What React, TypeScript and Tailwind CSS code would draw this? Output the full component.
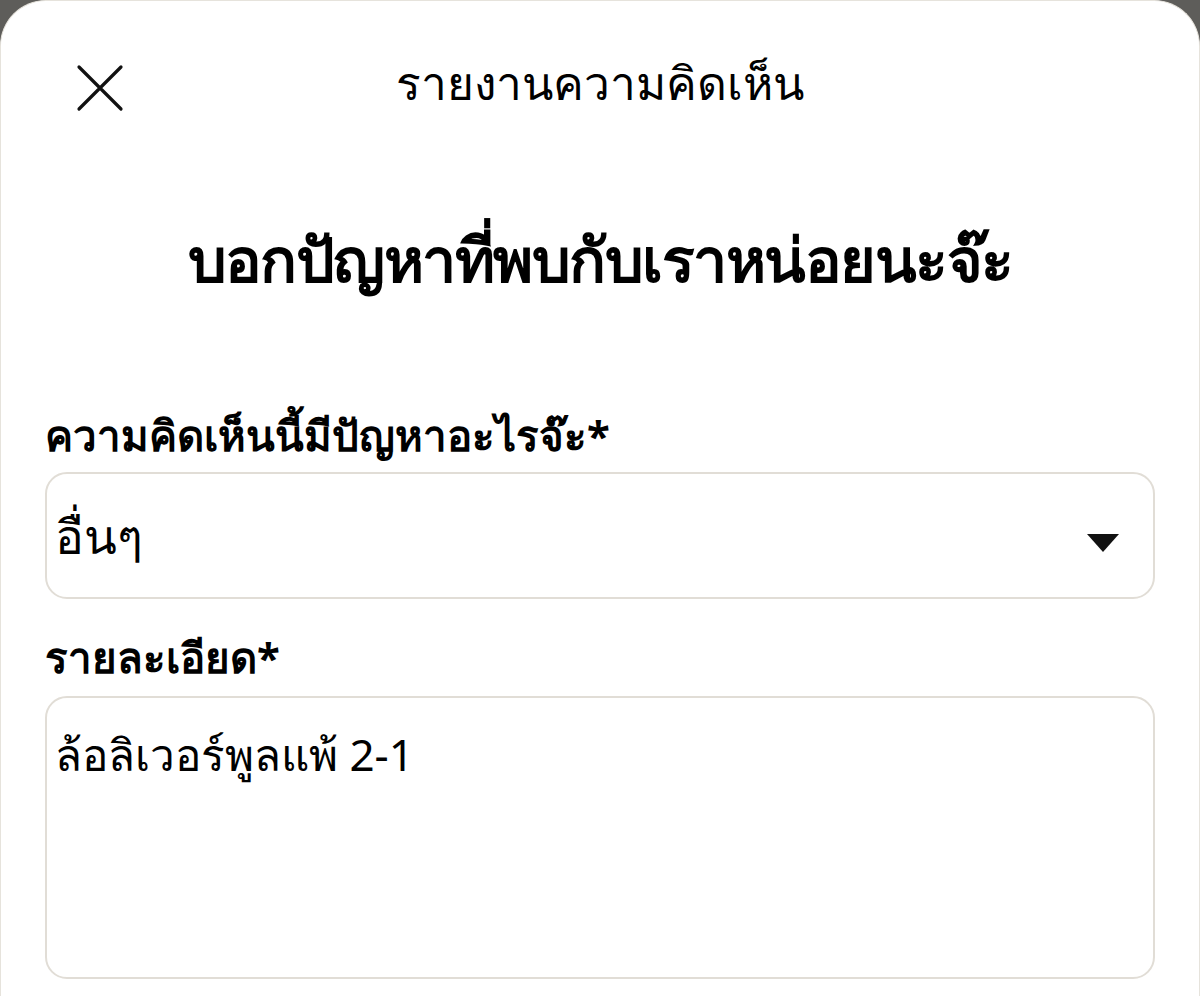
import { useState } from "react"

export default function App() {
  const [reason] = useState("อื่นๆ")
  const [detail, setDetail] = useState("ล้อลิเวอร์พูลแพ้ 2-1")

  return (
    <div className="w-[1200px] h-[996px] bg-[#5e5d5a] overflow-hidden">
      <div className="h-full bg-white rounded-t-[46px] border-x border-t border-[#e6e3dc] flex flex-col px-[44px] font-['Noto_Sans','Liberation_Sans',sans-serif] text-black">
        {/* header */}
        <div className="relative h-[218px] flex items-start justify-center pt-[49px]">
          <button className="absolute left-[30px] top-[62px] w-[50px] h-[50px] flex items-center justify-center">
            <svg width="48" height="48" viewBox="0 0 48 48" fill="none" stroke="#111" strokeWidth="3.2" strokeLinecap="round">
              <path d="M3 3L45 45M45 3L3 45" />
            </svg>
          </button>
          <h1 className="text-[46px] leading-[64px] font-medium">รายงานความคิดเห็น</h1>
        </div>

        <h2 className="text-center text-[61px] leading-[80px] font-bold tracking-tight">บอกปัญหาที่พบกับเราหน่อยนะจ๊ะ</h2>

        <div className="mt-[108px]">
          <label className="block text-[42px] leading-[56px] font-bold mb-[9px]">ความคิดเห็นนี้มีปัญหาอะไรจ๊ะ*</label>
          <div className="h-[127px] border-2 border-[#e1ddd6] rounded-[22px] flex items-center justify-between pl-[8px] pr-[34px]">
            <span className="text-[48px] leading-[64px]">{reason}</span>
            <svg width="32" height="18" viewBox="0 0 32 18" className="mt-[14px]">
              <path d="M0 0H32L16 18Z" fill="#111" />
            </svg>
          </div>
        </div>

        <div className="mt-[30px]">
          <label className="block text-[42px] leading-[56px] font-bold mb-[11px]">รายละเอียด*</label>
          <textarea
            value={detail}
            onChange={(e) => setDetail(e.target.value)}
            className="w-full h-[283px] border-2 border-[#e1ddd6] rounded-[22px] px-[8px] pt-[26px] text-[44px] leading-[60px] resize-none outline-none"
          />
        </div>
      </div>
    </div>
  )
}
